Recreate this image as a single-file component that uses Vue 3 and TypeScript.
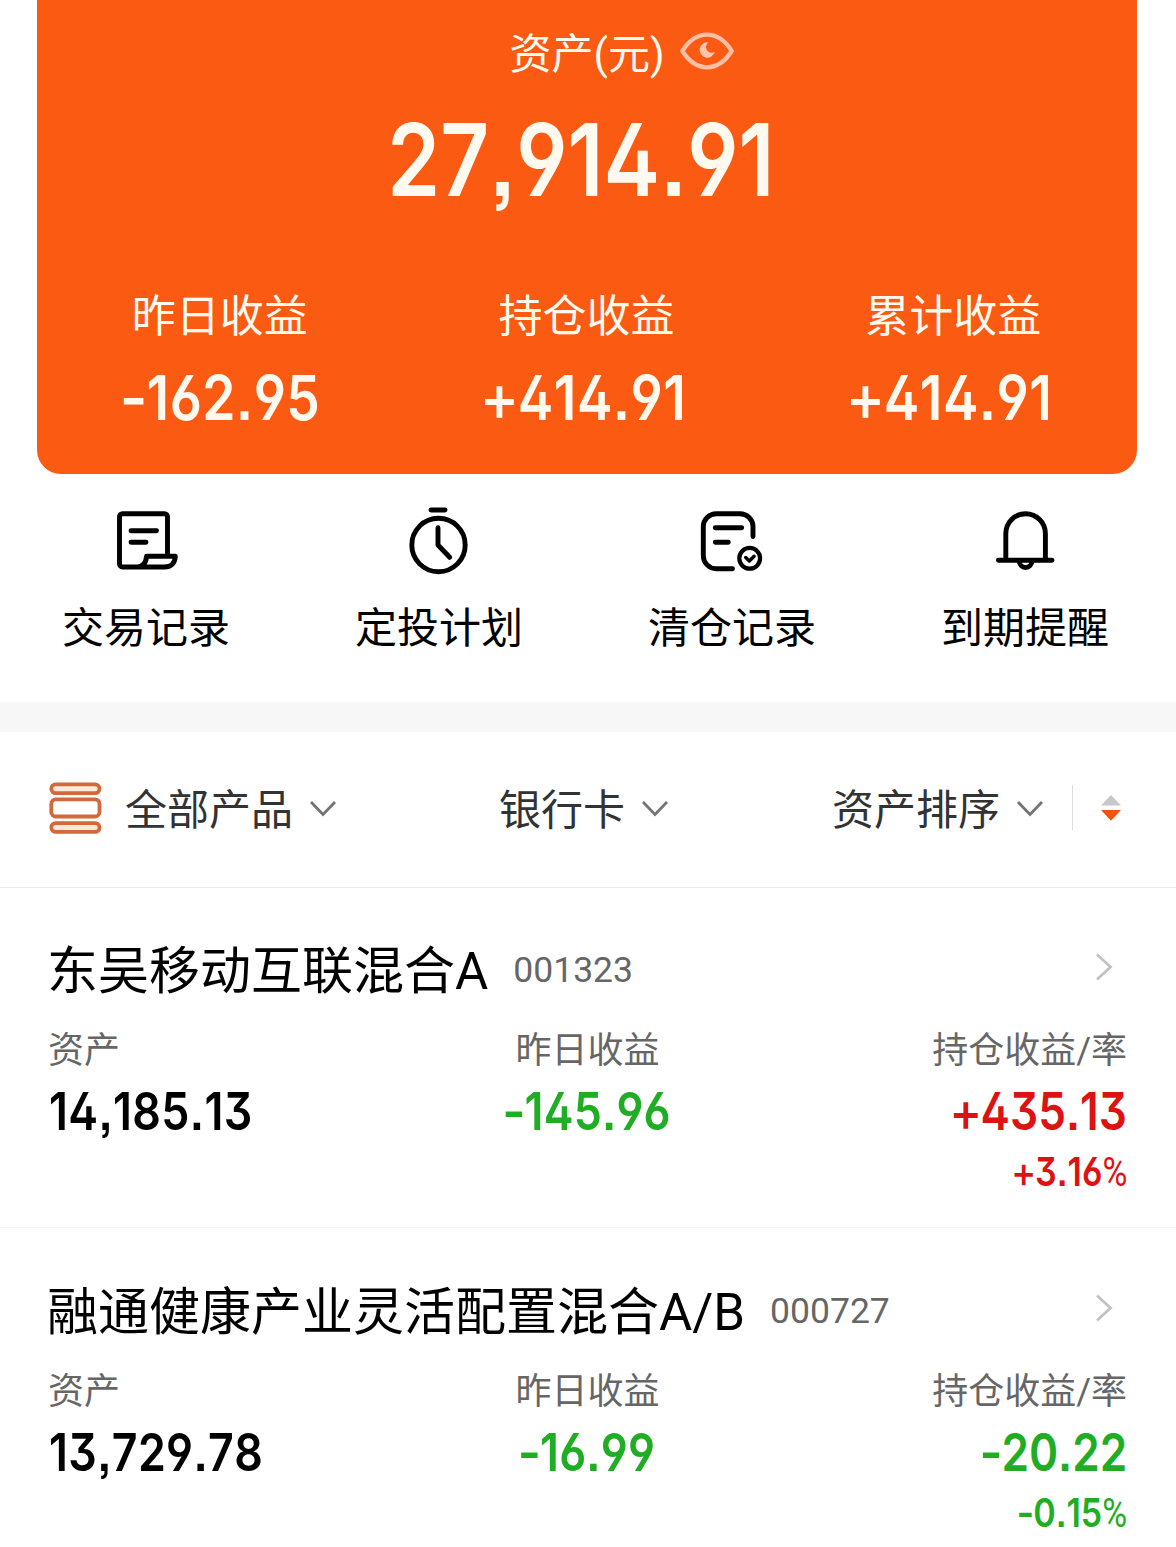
<script setup lang="ts">
interface Stat {
  label: string
  sign: string
  value: string
}

interface Amount {
  sign: string
  value: string
}

interface Fund {
  name: string
  code: string
  asset: string
  daily: Amount
  dailyTone: 'up' | 'down'
  gain: Amount
  rate: Amount
  gainTone: 'up' | 'down'
}

const stats: Stat[] = [
  { label: '昨日收益', sign: '-', value: '162.95' },
  { label: '持仓收益', sign: '+', value: '414.91' },
  { label: '累计收益', sign: '+', value: '414.91' },
]

const actions = [
  { id: 'records', label: '交易记录' },
  { id: 'plan', label: '定投计划' },
  { id: 'cleared', label: '清仓记录' },
  { id: 'remind', label: '到期提醒' },
]

const funds: Fund[] = [
  {
    name: '东吴移动互联混合A',
    code: '001323',
    asset: '14,185.13',
    daily: { sign: '-', value: '145.96' },
    dailyTone: 'down',
    gain: { sign: '+', value: '435.13' },
    rate: { sign: '+', value: '3.16' },
    gainTone: 'up',
  },
  {
    name: '融通健康产业灵活配置混合A/B',
    code: '000727',
    asset: '13,729.78',
    daily: { sign: '-', value: '16.99' },
    dailyTone: 'down',
    gain: { sign: '-', value: '20.22' },
    rate: { sign: '-', value: '0.15' },
    gainTone: 'down',
  },
]

const signClass = (sign: string): string => (sign === '+' ? 'plus' : 'minus')
</script>

<template>
  <main class="page">
    <section class="card">
      <div class="card-title">
        <span>资产(元)</span>
        <svg class="eye" width="54" height="38" viewBox="0 0 54 38">
          <path
            d="M2.300 19C9 8.500 18 2.700 27 2.700S45 8.500 51.700 19C45 29.500 36 35.300 27 35.300S9 29.500 2.300 19Z"
            fill="none"
            stroke="#ffbfa6"
            stroke-width="4.300"
            stroke-linejoin="round"
          />
          <path d="M28.500 10.400A7.700 7.700 0 1 0 34.800 19.800A5.400 5.400 0 1 1 28.500 10.400Z" fill="#ffc4ad" />
        </svg>
      </div>
      <div class="total"><span class="num">27,914.91</span></div>
      <div class="stats">
        <div v-for="s in stats" :key="s.label" class="stat">
          <div class="stat-label">{{ s.label }}</div>
          <div class="stat-value" :class="{ positive: s.sign === '+' }">
            <span class="num"><span :class="signClass(s.sign)">{{ s.sign }}</span>{{ s.value }}</span>
          </div>
        </div>
      </div>
    </section>

    <nav class="actions">
      <div v-for="a in actions" :key="a.id" class="action">
        <svg class="action-icon" width="72" height="72" viewBox="0 0 72 72">
          <template v-if="a.id === 'records'">
            <path d="M57.500 51V11.700a3 3 0 0 0-3-3h-42a3 3 0 0 0-3 3V59a3 3 0 0 0 3 3h42C61 62 65 58 65.300 51.300H36.500C36 58 33 62 27 62" />
            <path d="M21 25.700H46.500M21 37.300H36" />
          </template>
          <template v-else-if="a.id === 'plan'">
            <path d="M28 5H42" />
            <circle cx="35.500" cy="40" r="26.700" />
            <path d="M35 22.800V40L46.700 52.300" />
          </template>
          <template v-else-if="a.id === 'cleared'">
            <path d="M57 31.500V21.700a13 13 0 0 0-13-13H20.300a13 13 0 0 0-13 13v29a13 13 0 0 0 13 13H36.500" />
            <path d="M19.300 22.700H45.700M19.300 37.300H32.300" />
            <circle cx="53.700" cy="53.300" r="10.400" stroke-width="4.200" />
            <path d="M49.700 52.500L53.400 56L58.100 51.300" stroke-width="3.400" />
          </template>
          <template v-else>
            <path d="M16.800 55V28.700a19.800 20 0 0 1 39.600 0V55M9.400 55.300H63" />
            <path d="M30.300 56a6.300 6.500 0 0 0 12.600 0" />
          </template>
        </svg>
        <span class="action-label">{{ a.label }}</span>
      </div>
    </nav>

    <div class="band"></div>

    <div class="filters">
      <div class="filter filter-product">
        <svg class="stack" width="54" height="54" viewBox="0 0 54 54">
          <g fill="#fdeadd" stroke="#d4683a" stroke-width="3.800">
            <rect x="3.300" y="3.300" width="48.200" height="8.800" rx="4.400" />
            <rect x="3.300" y="18.300" width="48.200" height="17.200" rx="4.500" fill="#fff" />
            <rect x="3.300" y="42.100" width="48.200" height="8.800" rx="4.400" />
          </g>
        </svg>
        <span>全部产品</span>
        <svg class="chevron" width="28" height="18" viewBox="0 0 28 18">
          <path d="M2 3L14 15.500L26 3" />
        </svg>
      </div>
      <div class="filter filter-bank">
        <span>银行卡</span>
        <svg class="chevron" width="28" height="18" viewBox="0 0 28 18">
          <path d="M2 3L14 15.500L26 3" />
        </svg>
      </div>
      <div class="filter filter-sort">
        <span>资产排序</span>
        <svg class="chevron" width="28" height="18" viewBox="0 0 28 18">
          <path d="M2 3L14 15.500L26 3" />
        </svg>
        <i class="divider"></i>
        <svg class="sorter" width="20" height="26" viewBox="0 0 20 26">
          <path d="M10 0L20 10.400H0Z" fill="#c8c8c8" />
          <path d="M10 25.800L20 15H0Z" fill="#f5500d" />
        </svg>
      </div>
    </div>

    <section v-for="f in funds" :key="f.code" class="fund">
      <header class="fund-head">
        <span class="fund-name">{{ f.name }}</span>
        <span class="fund-code">{{ f.code }}</span>
        <svg class="go" width="18" height="30" viewBox="0 0 18 30">
          <path d="M2 2.500L15.500 15L2 27.500" />
        </svg>
      </header>
      <div class="fund-grid">
        <div class="cell left">
          <div class="cell-label">资产</div>
          <div class="cell-value"><span class="num">{{ f.asset }}</span></div>
        </div>
        <div class="cell mid">
          <div class="cell-label">昨日收益</div>
          <div class="cell-value" :class="f.dailyTone">
            <span class="num"><span :class="signClass(f.daily.sign)">{{ f.daily.sign }}</span>{{ f.daily.value }}</span>
          </div>
        </div>
        <div class="cell right">
          <div class="cell-label">持仓收益/率</div>
          <div class="cell-value" :class="f.gainTone">
            <span class="num"><span :class="signClass(f.gain.sign)">{{ f.gain.sign }}</span>{{ f.gain.value }}</span>
          </div>
          <div class="cell-rate" :class="f.gainTone">
            <span class="num"><span :class="signClass(f.rate.sign)">{{ f.rate.sign }}</span>{{ f.rate.value }}<span class="pct">%</span></span>
          </div>
        </div>
      </div>
    </section>
  </main>
</template>

<style>
body {
  background: #fff;
}
</style>

<style scoped>
.page {
  width: 1176px;
  height: 1547px;
  overflow: hidden;
  background: #fff;
  color: #000;
  font-family: Roboto, "Noto Sans CJK SC", sans-serif;
  box-sizing: border-box;
}

.num {
  display: inline-block;
  font-family: Inter, Roboto, sans-serif;
  font-weight: 600;
  font-feature-settings: "ss01", "ss07";
  font-kerning: none;
  letter-spacing: 0.004em;
  transform: scaleX(0.86);
  white-space: nowrap;
}

.plus,
.minus {
  display: inline-block;
}

.plus {
  font-weight: 500;
  transform: scale(1.12, 1.06);
}

.minus {
  transform: scaleX(1.12);
}

.card {
  width: 1100px;
  height: 474px;
  margin-left: 37px;
  border-radius: 0 0 24px 24px;
  background: #fb5a13;
  color: #fffaf0;
}

.card-title {
  display: flex;
  align-items: center;
  justify-content: center;
  gap: 15px;
  height: 60px;
  padding: 25px 0 0 69px;
  font-size: 42px;
  line-height: 60px;
}

.eye {
  margin-top: -9px;
}

.total {
  height: 120px;
  margin-top: 15px;
  padding-right: 12px;
  font-size: 100px;
  line-height: 120px;
  text-align: center;
}

.total .num {
  letter-spacing: 0;
  transform: scaleX(0.85);
}

.stats {
  display: grid;
  grid-template-columns: repeat(3, 1fr);
  margin-top: 67px;
  text-align: center;
}

.stat-label {
  margin-left: -1px;
  font-size: 44px;
  line-height: 60px;
}

.stat-value {
  margin-top: 11px;
  font-size: 62px;
  line-height: 80px;
}

.stat-value .num {
  letter-spacing: 0.01em;
}

.stat-value.positive {
  padding-right: 7px;
}

.actions {
  display: grid;
  grid-template-columns: repeat(4, 293px);
  height: 228px;
}

.action {
  display: flex;
  flex-direction: column;
  align-items: center;
  padding: 31px 1px 0 0;
}

.action-icon {
  fill: none;
  stroke: #000;
  stroke-width: 4.9;
  stroke-linecap: round;
  stroke-linejoin: round;
}

.action-label {
  margin-top: 22px;
  font-size: 42px;
  line-height: 60px;
}

.band {
  height: 30px;
  background: #f7f7f7;
}

.filters {
  display: flex;
  align-items: center;
  height: 155px;
  border-bottom: 1px solid #e9e9e9;
  color: #333;
  font-size: 42px;
  line-height: 60px;
}

.filter {
  display: flex;
  align-items: center;
  height: 60px;
  padding-bottom: 4px;
}

.filter > span {
  padding-top: 6px;
}

.filter-product {
  width: 451px;
  padding-left: 48px;
}

.stack {
  margin-right: 23px;
}

.chevron {
  margin-left: 16px;
  fill: none;
  stroke: #747474;
  stroke-width: 2.8;
}

.filter-bank {
  width: 333px;
}

.divider {
  width: 1px;
  height: 45px;
  margin-left: 28px;
  background: #dcdcdc;
}

.sorter {
  margin-left: 28px;
}

.fund {
  height: 340px;
  padding: 0 49px 0 48px;
  box-sizing: border-box;
  border-bottom: 1px solid #f3f3f3;
}

.fund + .fund {
  margin-top: 1px;
}

.fund-head {
  display: flex;
  align-items: center;
  height: 72px;
  padding-top: 46px;
}

.fund-name {
  margin: 3px 0 0 -1px;
  font-size: 51px;
  line-height: 72px;
}

.fund-code {
  margin-left: 25px;
  color: #666;
  font-size: 35.5px;
}

.go {
  margin-left: auto;
  margin-right: 14px;
  margin-top: -6px;
  fill: none;
  stroke: #c2c2c2;
  stroke-width: 2.8;
}

.fund-grid {
  display: grid;
  grid-template-columns: repeat(3, 1fr);
  margin-top: 20px;
}

.cell-label {
  color: #666;
  font-size: 36px;
  line-height: 50px;
}

.cell-value {
  margin-top: 4px;
  font-size: 52px;
  line-height: 64px;
}

.cell-rate {
  font-size: 40px;
  line-height: 54px;
}

.mid {
  text-align: center;
}

.right {
  text-align: right;
}

.left .num {
  margin-left: 1px;
  letter-spacing: 0.008em;
  transform-origin: 0 50%;
}

.right .num {
  letter-spacing: 0;
  transform: scaleX(0.85);
  transform-origin: 100% 50%;
}

.up {
  color: #dd1313;
}

.down {
  color: #1fad23;
}

.pct {
  font-family: Roboto, sans-serif;
  font-weight: 400;
}
</style>
